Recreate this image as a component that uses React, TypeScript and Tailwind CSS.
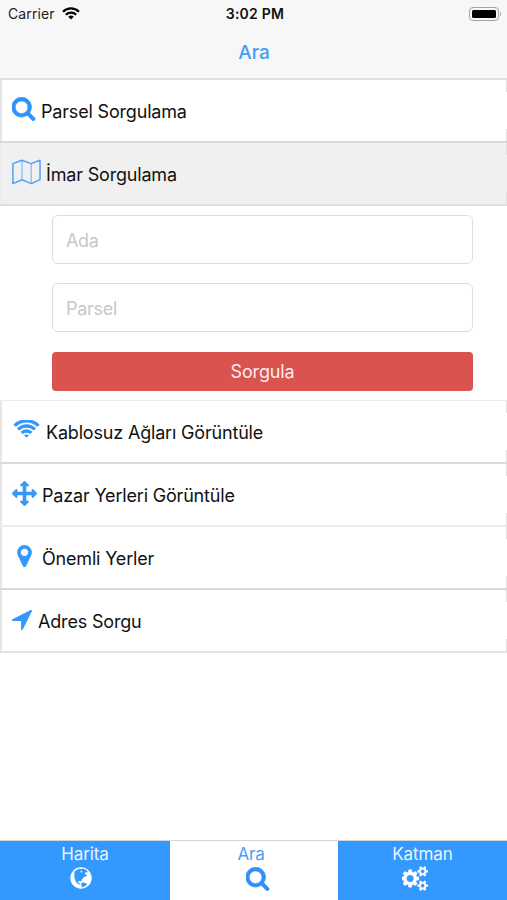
import type { ReactNode } from "react";

type IconProps = { className?: string };

const SearchIcon = ({ className }: IconProps) => (
  <svg viewBox="108 108 1660 1704" className={className} fill="currentColor" stroke="currentColor" strokeWidth="40">
    <path d="M1216 832q0-185-131.5-316.5t-316.5-131.5-316.5 131.5-131.5 316.5 131.5 316.5 316.5 131.5 316.5-131.5 131.5-316.5zm512 832q0 52-38 90t-90 38q-54 0-90-38l-343-342q-179 124-399 124-143 0-273.5-55.5t-225-150-150-225-55.5-273.5 55.5-273.5 150-225 225-150 273.5-55.5 273.5 55.5 225 150 150 225 55.5 273.5q0 220-124 399l343 343q37 37 37 90z" />
  </svg>
);

const MapIcon = ({ className }: IconProps) => (
  <svg viewBox="0 0 29 26" className={className} fill="none" stroke="currentColor" strokeLinejoin="round">
    <path strokeWidth="1.5" d="M.9 4.6 10 1.2l9.2 3.4L28 1.2v19.4L19.2 24.6 10 20.8.9 24.6Z" />
    <path strokeWidth="1.1" opacity=".75" d="M10 1.2v19.6M19.2 4.6v20" />
  </svg>
);

const WifiIcon = ({ className }: IconProps) => (
  <svg viewBox="0 220 2048 1303" className={className} fill="currentColor">
    <path d="M1024 1523q-20 0-93-73.5t-73-93.5q0-32 62.5-54t103.5-22 103.5 22 62.5 54q0 20-73 93.5t-93 73.5zm270-271q-2 0-40-25t-101.5-50-128.5-25-128.5 25-101 50-40.5 25q-18 0-93.5-75t-75.5-93q0-13 10-23 78-77 196-121t233-44 233 44 196 121q10 10 10 23 0 18-75.5 93t-93.5 75zm273-272q-11 0-23-8-136-105-252-154.5t-268-49.5q-85 0-170.5 22t-149 53-113.5 62-79 53-31 22q-17 0-92-75t-75-93q0-12 10-22 132-132 320-205t380-73 380 73 320 205q10 10 10 22 0 18-75 93t-92 75zm271-271q-11 0-22-9-179-157-371.5-236.5t-420.5-79.5-420.5 79.5-371.5 236.5q-11 9-22 9-17 0-92.5-75t-75.5-93q0-13 10-23 187-186 445-288t527-102 527 102 445 288q10 10 10 23 0 18-75.5 93t-92.5 75z" />
  </svg>
);

const ArrowsIcon = ({ className }: IconProps) => (
  <svg viewBox="0 0 1792 1792" className={className} fill="currentColor">
    <path d="M1792 896q0 26-19 45l-256 256q-19 19-45 19t-45-19-19-45v-128h-384v384h128q26 0 45 19t19 45-19 45l-256 256q-19 19-45 19t-45-19l-256-256q-19-19-19-45t19-45 45-19h128v-384h-384v128q0 26-19 45t-45 19-45-19l-256-256q-19-19-19-45t19-45l256-256q19-19 45-19t45 19 19 45v128h384v-384h-128q-26 0-45-19t-19-45 19-45l256-256q19-19 45-19t45 19l256 256q19 19 19 45t-19 45-45 19h-128v384h384v-128q0-26 19-45t45-19 45 19l256 256q19 19 19 45z" />
  </svg>
);

const MarkerIcon = ({ className }: IconProps) => (
  <svg viewBox="384 128 1024 1536" className={className} fill="currentColor">
    <path d="M1152 640q0-106-75-181t-181-75-181 75-75 181 75 181 181 75 181-75 75-181zm256 0q0 109-33 179l-364 774q-16 33-47.5 52t-67.5 19-67.5-19-46.5-52l-365-774q-33-70-33-179 0-212 150-362t362-150 362 150 150 362z" />
  </svg>
);

const LocationIcon = ({ className }: IconProps) => (
  <svg viewBox="192 256 1408 1408" className={className} fill="currentColor">
    <path d="M1593 349l-640 1280q-17 35-57 35-5 0-15-2-22-5-35.5-22.5t-13.5-39.5v-576h-576q-22 0-39.5-13.5t-22.5-35.5 4-42 29-30l1280-640q13-7 29-7 27 0 45 19 15 14 18.5 34.5t-6.5 39.5z" />
  </svg>
);

const GlobeIcon = ({ className }: IconProps) => (
  <svg viewBox="0 0 22 22" className={className}>
    <circle cx="11" cy="11" r="10.7" fill="white" />
    <path
      fill="#3399ff"
      d="M4.3 4.8 6.4 3 9.2 1.8l2 .5 1.6-.7 2.6.9 2.2 1.8-.6 1.5-1.5-.6-.9 1.4 1.4.8 1.3 1.1-1.6 1.1-1.8.5-1.3 1.6-1.1 1.7.1 1.3-1.3-.8-1.9.2-.4 1.3 1.4.7.9 1.5-1.8-.4-2.1-1.6-1.3-2.7-.8-2.6.1-2.8Z"
    />
    <path fill="#3399ff" d="m11 16.4 1.9-.8 2.5.5 1.7 1-1.9 1.9-3.2 1.4-.6-1.8Z" />
    <path fill="white" d="m10.4 3.9 1.6.2.5 1.1-1.7.3Z" />
  </svg>
);

const CogsIcon = ({ className }: IconProps) => (
  <svg viewBox="0 0 1920 1792" className={className} fill="currentColor">
    <path d="M832 896q0-106-75-181t-181-75-181 75-75 181 75 181 181 75 181-75 75-181zm768 512q0-52-38-90t-90-38-90 38-38 90q0 53 37.5 90.5t90.5 37.5 90.5-37.5 37.5-90.5zm0-1024q0-52-38-90t-90-38-90 38-38 90q0 53 37.5 90.5t90.5 37.5 90.5-37.5 37.5-90.5zm-384 421v185q0 10-7 19.5t-16 10.5l-155 24q-11 35-32 76 34 48 90 115 7 11 7 20 0 12-7 19-23 30-82.5 89.5t-78.5 59.5q-11 0-21-7l-115-90q-37 19-77 31-11 108-23 155-7 24-30 24h-186q-11 0-20-7.5t-10-17.5l-23-153q-34-10-75-31l-118 89q-7 7-20 7-11 0-21-8-144-133-144-160 0-9 7-19 10-14 41-53t47-61q-23-44-35-82l-152-24q-10-1-17-9.5t-7-19.5v-185q0-10 7-19.5t16-10.5l155-24q11-35 32-76-34-48-90-115-7-11-7-20 0-12 7-20 22-30 82-89t79-59q11 0 21 7l115 90q34-18 77-32 11-108 23-154 7-24 30-24h186q11 0 20 7.5t10 17.5l23 153q34 10 75 31l118-89q8-7 20-7 11 0 21 8 144 133 144 160 0 8-7 19-12 16-42 54t-45 60q23 48 34 82l152 23q10 2 17 10.5t7 19.5zm640 533v140q0 16-149 31-12 27-30 52 51 113 51 138 0 4-4 7-122 71-124 71-8 0-46-47t-52-68q-20 2-30 2t-30-2q-14 21-52 68t-46 47q-2 0-124-71-4-3-4-7 0-25 51-138-18-25-30-52-149-15-149-31v-140q0-16 149-31 13-29 30-52-51-113-51-138 0-4 4-7 4-2 35-20t59-34 30-16q8 0 46 46.5t52 67.5q20-2 30-2t30 2q51-71 92-112l6-2q4 0 124 70 4 3 4 7 0 25-51 138 17 23 30 52 149 15 149 31zm0-1024v140q0 16-149 31-12 27-30 52 51 113 51 138 0 4-4 7-122 71-124 71-8 0-46-47t-52-68q-20 2-30 2t-30-2q-14 21-52 68t-46 47q-2 0-124-71-4-3-4-7 0-25 51-138-18-25-30-52-149-15-149-31v-140q0-16 149-31 13-29 30-52-51-113-51-138 0-4 4-7 4-2 35-20t59-34 30-16q8 0 46 46.5t52 67.5q20-2 30-2t30 2q51-71 92-112l6-2q4 0 124 70 4 3 4 7 0 25-51 138 17 23 30 52 149 15 149 31z" />
  </svg>
);

const StatusWifi = () => (
  <svg viewBox="0 0 18 13" className="ml-[7px] h-[13px] w-[18px]" fill="none" stroke="black" strokeWidth="2.2">
    <path d="M1 4.7a11.5 11.5 0 0 1 16 0M3.8 7.7a7.4 7.4 0 0 1 10.4 0" />
    <path d="M9 12.6 6.2 9.8a4 4 0 0 1 5.6 0Z" fill="black" stroke="none" />
  </svg>
);

const Battery = () => (
  <div className="flex items-center gap-px">
    <div className="h-[14px] w-[30px] rounded-[4px] border border-[#a5a5a5] p-[2px]">
      <div className="h-full rounded-[1.5px] bg-black" />
    </div>
    <div className="h-[4px] w-[1.5px] rounded-r bg-[#a5a5a5]" />
  </div>
);

/* Short strokes at the ends of the right edge leave its middle open. */
const Row = ({ icon, gap, label, line, active = false }: {
  icon: ReactNode; gap: string; label: string; line: string; active?: boolean;
}) => (
  <div className={`flex h-[63px] shrink-0 border-b-2 ${line} ${active ? "bg-[#f0f0f0]" : "bg-white"}`}>
    <div className={`w-[2px] ${active ? "bg-[#ececec]" : "bg-[#e6e6e6]"}`} />
    <div className="flex flex-1 items-center pl-[10px]">
      {icon}
      <span className={`pt-[2px] text-[18px] leading-[22px] tracking-[-0.18px] whitespace-nowrap text-[#111] ${gap}`}>{label}</span>
    </div>
    <div className="flex w-px flex-col justify-between">
      <div className="h-[12px] bg-[#e2e2e2]" />
      <div className="h-[12px] bg-[#e2e2e2]" />
    </div>
  </div>
);

export default function App() {
  return (
    <div className="flex h-[900px] w-[507px] flex-col overflow-hidden bg-white font-['Inter','Liberation_Sans',sans-serif]">
      <header className="flex h-[80px] shrink-0 flex-col border-b-2 border-[#dfdfdf] bg-[#f7f7f7]">
        <div className="grid h-[27px] grid-cols-[1fr_auto_1fr] items-center pr-[6px] pl-[8px]">
          <div className="flex items-center text-[14px] tracking-[0.1px] text-[#222]">
            Carrier
            <StatusWifi />
          </div>
          <span className="pl-px text-[14px] font-semibold tracking-[0.25px] text-[#111]">3:02 PM</span>
          <div className="flex justify-end"><Battery /></div>
        </div>
        <h1 className="pt-[13px] pl-px text-center text-[19px] leading-[26px] font-medium text-[#3f9ff5]">Ara</h1>
      </header>

      <Row icon={<SearchIcon className="-mt-[4px] h-[24px] w-[24px] text-[#3091fb]" />} gap="ml-[5px]" label="Parsel Sorgulama" line="border-[#d8d8d8]" />
      <Row active icon={<MapIcon className="-mt-[4px] h-[26px] w-[29px] text-[#4ba3fa]" />} gap="ml-[5px]" label="İmar Sorgulama" line="border-[#dedede]" />

      <form className="flex h-[194px] shrink-0 flex-col pt-[9px] pr-[34px] pl-[52px]">
        <input placeholder="Ada" className="h-[49px] shrink-0 rounded-[6px] border border-[#dedede] px-[13px] pt-[2px] text-[18px] tracking-[-0.3px] placeholder:text-[#c7c7cd]" />
        <input placeholder="Parsel" className="mt-[19px] h-[49px] shrink-0 rounded-[6px] border border-[#dedede] px-[13px] pt-[2px] text-[18px] tracking-[-0.3px] placeholder:text-[#c7c7cd]" />
        <button type="button" className="mt-[20px] h-[39px] shrink-0 rounded-[4px] bg-[#d9534f] text-[18px] tracking-[-0.15px] text-[#fdeeee]">Sorgula</button>
      </form>

      <div className="h-px shrink-0 bg-[#ebebeb]" />
      <Row icon={<WifiIcon className="-mt-[5px] ml-px h-[18px] w-[27px] text-[#3399fa]" />} gap="ml-[6px]" label="Kablosuz Ağları Görüntüle" line="border-[#dadada]" />
      <Row icon={<ArrowsIcon className="-mt-[2px] h-[25px] w-[25px] text-[#3399fa]" />} gap="ml-[5px]" label="Pazar Yerleri Görüntüle" line="border-[#ececec]" />
      <Row icon={<MarkerIcon className="-mt-[3px] ml-[5px] h-[22px] w-[15px] text-[#3399fa]" />} gap="ml-[10px]" label="Önemli Yerler" line="border-[#d8d8d8]" />
      <Row icon={<LocationIcon className="-mt-[2px] h-[20px] w-[20px] text-[#3399fa]" />} gap="ml-[6px]" label="Adres Sorgu" line="border-[#e2e2e2]" />

      <nav className="mt-auto grid h-[60px] shrink-0 grid-cols-[170px_168px_169px] border-t border-[#d4d4d4] text-[17px] leading-[22px]">
        <div className="flex flex-col items-center bg-[#3399ff] pt-[2px] text-[#e9f4ff]">
          <span className="tracking-[-0.1px]">Harita</span>
          <GlobeIcon className="mt-[2px] mr-[8px] h-[22px] w-[22px]" />
        </div>
        <div className="flex flex-col items-center pt-[2px] text-[#4aa0f5]">
          <span className="mr-[6px] tracking-[-0.3px]">Ara</span>
          <SearchIcon className="mt-[2px] ml-[8px] h-[24px] w-[24px] text-[#3090f5]" />
        </div>
        <div className="flex flex-col items-center bg-[#3399ff] pt-[2px] text-[#e9f4ff]">
          <span className="tracking-[-0.1px]">Katman</span>
          <CogsIcon className="mt-px mr-[15px] h-[25px] w-[27px] text-white" />
        </div>
      </nav>
    </div>
  );
}
